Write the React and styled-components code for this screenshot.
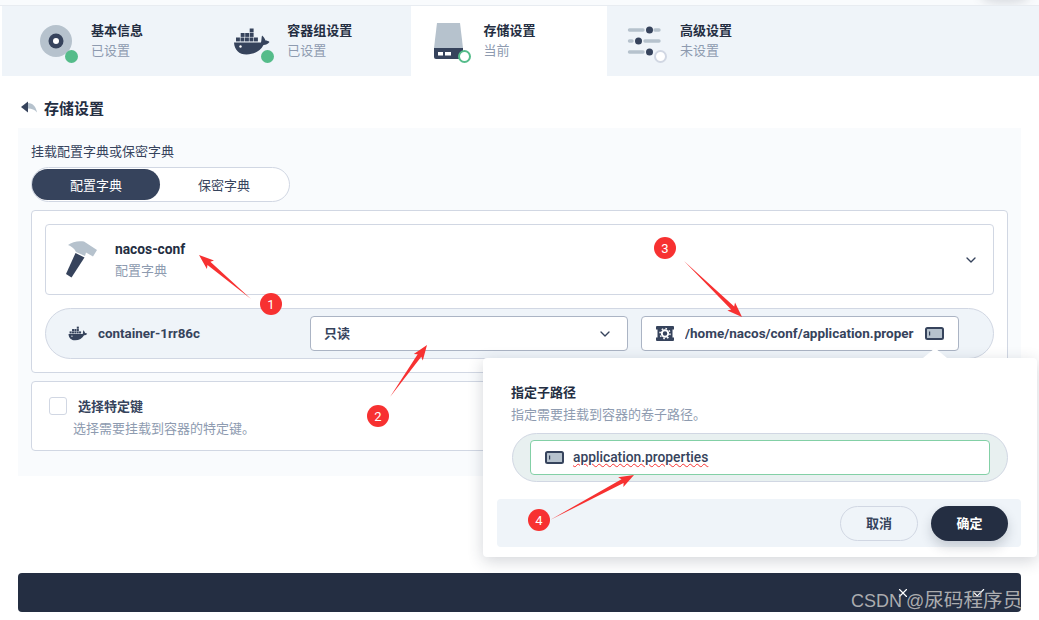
import styled, { createGlobalStyle } from "styled-components";
import { ChevronDown, Check, X } from "lucide-react";

const TABS = [
  { name: "基本信息", note: "已设置", state: "done", icon: "disc" },
  { name: "容器组设置", note: "已设置", state: "done", icon: "docker" },
  { name: "存储设置", note: "当前", state: "current", icon: "disk" },
  { name: "高级设置", note: "未设置", state: "todo", icon: "sliders" },
];

const MARKS = [
  { label: "1", x: 271, y: 304, from: [251, 299], to: [199, 255] },
  { label: "2", x: 378, y: 416, from: [390, 397], to: [427, 345] },
  { label: "3", x: 665, y: 248, from: [684, 261], to: [742, 317] },
  { label: "4", x: 539, y: 520, from: [550, 520], to: [634, 475] },
];

const DARK = "#36435c";
const LIGHT = "#b6c2cd";

function DockerShape() {
  const boxes = [
    [19.7, 3.5],
    [10.7, 8],
    [15.2, 8],
    [19.7, 8],
    [6, 12.5],
    [10.5, 12.5],
    [15, 12.5],
    [19.5, 12.5],
    [24, 12.5],
  ];
  return (
    <>
      {boxes.map(([x, y]) => (
        <rect key={`${x}-${y}`} x={x} y={y} width="3.9" height="3.9" fill={DARK} />
      ))}
      <path
        fill={DARK}
        d="M4 17.5H31C31.5 15 31.5 12.5 32 10.5C33.5 11.5 35 14 35.5 15.5C37 15.5 38.5 16 39.5 17C38 19 36 20 33.5 20C30.5 26 24 29.5 16.5 29.5C9 29.5 4.5 25 4 17.5Z"
      />
      <circle cx="10.5" cy="21.5" r="1.2" fill="#fff" />
    </>
  );
}

function TabIcon({ kind }) {
  if (kind === "disc") {
    return (
      <svg width="44" height="44" viewBox="0 0 44 44">
        <circle cx="22" cy="22" r="16" fill={LIGHT} />
        <circle cx="22" cy="22" r="7.5" fill={DARK} />
        <circle cx="22" cy="22" r="3" fill="#fff" />
      </svg>
    );
  }
  if (kind === "docker") {
    return (
      <svg width="44" height="44" viewBox="0 -6 44 44">
        <DockerShape />
      </svg>
    );
  }
  if (kind === "disk") {
    return (
      <svg width="44" height="44" viewBox="0 0 44 44">
        <path fill={LIGHT} d="M10 4H33L36 29H7Z" />
        <path fill={DARK} d="M7 29H36V38a2 2 0 0 1-2 2H9a2 2 0 0 1-2-2Z" />
        <rect x="11" y="33" width="5" height="3.5" fill="#fff" />
        <rect x="18" y="33" width="6" height="3.5" fill="#fff" />
      </svg>
    );
  }
  return (
    <svg width="44" height="44" viewBox="0 0 44 44" strokeLinecap="round">
      <g stroke={LIGHT} strokeWidth="3.4">
        <path d="M6.5 11H20M32 11H36" />
        <path d="M6.5 22H9M22 22H36" />
        <path d="M6.5 33H20" />
      </g>
      <circle cx="26.5" cy="11" r="3.5" fill={DARK} />
      <circle cx="15.5" cy="22" r="3.5" fill={DARK} />
      <circle cx="26.5" cy="33" r="3.5" fill={DARK} />
    </svg>
  );
}

function HammerIcon() {
  return (
    <svg width="40" height="44" viewBox="62 238 40 44">
      <path fill={LIGHT} d="M68 245C72 241.5 79 240.5 84 241.5L97 250L93 256.5L86 252.5L85 256L76 252C74 248 71 246 68 245Z" />
      <path fill={DARK} d="M75.5 253L84.5 257.5L71.5 277.5L66 274Z" />
    </svg>
  );
}

function GearIcon() {
  return (
    <svg width="18" height="15" viewBox="0 0 18 15">
      <path fill={DARK} d="M1 0H17a1 1 0 0 1 1 1V3.5H16.5V11.5H18V14a1 1 0 0 1-1 1H1a1 1 0 0 1-1-1V11.5H1.5V3.5H0V1a1 1 0 0 1 1-1Z" />
      <circle cx="9" cy="7.5" r="5" fill="none" stroke="#fff" strokeWidth="1.5" strokeDasharray="1.6 2.3" />
      <circle cx="9" cy="7.5" r="3.2" fill="none" stroke="#fff" strokeWidth="1.9" />
    </svg>
  );
}

function VolumeIcon() {
  return (
    <svg width="19" height="13" viewBox="0 0 19 13">
      <rect x="1" y="1" width="17" height="11" rx="1.5" fill={LIGHT} stroke={DARK} strokeWidth="2" />
      <rect x="4" y="4.5" width="1.2" height="4" fill={DARK} />
    </svg>
  );
}

function ArrowMark({ from, to }) {
  const dx = to[0] - from[0];
  const dy = to[1] - from[1];
  const len = Math.hypot(dx, dy);
  const ux = dx / len;
  const uy = dy / len;
  const at = (back, side) => `${to[0] - ux * back - uy * side},${to[1] - uy * back + ux * side}`;
  const points = [
    `${from[0]},${from[1]}`,
    at(13, 2.2),
    at(15, 5.5),
    `${to[0]},${to[1]}`,
    at(15, -5.5),
    at(13, -2.2),
  ].join(" ");
  return <polygon points={points} fill="#f73131" />;
}

export default function App() {
  return (
    <Page>
      <GlobalStyle />
      <TopStrip />
      <Tabs>
        {TABS.map((tab) => (
          <Tab key={tab.name} $active={tab.state === "current"}>
            <TabIconBox>
              <TabIcon kind={tab.icon} />
              <StatusDot $state={tab.state} />
            </TabIconBox>
            <div>
              <TabName>{tab.name}</TabName>
              <TabNote>{tab.note}</TabNote>
            </div>
          </Tab>
        ))}
      </Tabs>

      <TitleRow>
        <svg width="18" height="14" viewBox="0 0 18 14">
          <path fill={DARK} d="M1 7L8 1.5V12.5Z" />
          <path fill={LIGHT} d="M8 3C13 3 16 7 17 12.5C14.5 9.5 12 8.5 8 8.5Z" />
        </svg>
        存储设置
      </TitleRow>

      <Panel>
        <FieldLabel>挂载配置字典或保密字典</FieldLabel>
        <Switch>
          <SwitchItem $on>配置字典</SwitchItem>
          <SwitchItem>保密字典</SwitchItem>
        </Switch>

        <Box>
          <ConfigCard>
            <HammerIcon />
            <ConfigText>
              <ConfigName>nacos-conf</ConfigName>
              <ConfigType>配置字典</ConfigType>
            </ConfigText>
            <ChevronDown size={16} color={DARK} strokeWidth={2} />
          </ConfigCard>

          <MountRow>
            <ContainerName>
              <svg width="20" height="15" viewBox="3 2.5 38 28">
                <DockerShape />
              </svg>
              container-1rr86c
            </ContainerName>
            <Field>
              <ReadMode>只读</ReadMode>
              <ChevronDown size={16} color={DARK} strokeWidth={2} />
            </Field>
            <Field>
              <GearIcon />
              <PathText>/home/nacos/conf/application.proper</PathText>
              <VolumeIcon />
            </Field>
          </MountRow>
        </Box>

        <KeysBox>
          <KeysHead>
            <CheckBox />
            <KeysTitle>选择特定键</KeysTitle>
          </KeysHead>
          <KeysNote>选择需要挂载到容器的特定键。</KeysNote>
        </KeysBox>
      </Panel>

      <BottomBar>
        <X size={14} color="#fff" strokeWidth={2} />
        <Check size={14} color="#fff" strokeWidth={2} />
      </BottomBar>

      <Popover>
        <PopHead>
          <PopTitle>指定子路径</PopTitle>
          <PopNote>指定需要挂载到容器的卷子路径。</PopNote>
        </PopHead>
        <SubPathPill>
          <SubPathInput>
            <VolumeIcon />
            <SubPathText>application.properties</SubPathText>
          </SubPathInput>
        </SubPathPill>
        <PopFooter>
          <CancelButton>取消</CancelButton>
          <ConfirmButton>确定</ConfirmButton>
        </PopFooter>
      </Popover>

      <Annotations width="1039" height="620" viewBox="0 0 1039 620">
        {MARKS.map((mark) => (
          <ArrowMark key={mark.label} from={mark.from} to={mark.to} />
        ))}
      </Annotations>
      {MARKS.map((mark) => (
        <NumberBadge key={mark.label} $x={mark.x} $y={mark.y}>
          {mark.label}
        </NumberBadge>
      ))}

      <Watermark>
        CSDN @<WatermarkCjk>尿码程序员</WatermarkCjk>
      </Watermark>
    </Page>
  );
}

const GlobalStyle = createGlobalStyle`
  html, body {
    margin: 0;
    background: #fff;
  }
  body {
    font-family: Roboto, "Noto Sans CJK SC", sans-serif;
    color: #242e42;
  }
`;

const Page = styled.div`
  position: relative;
  width: 1039px;
  height: 620px;
  overflow: hidden;
  background: #fff;
`;

const TopStrip = styled.div`
  position: relative;
  height: 5px;
  background: #f9fbfd;
  border-bottom: 1px solid #e8ecf1;
  overflow: hidden;

  &::after {
    content: "";
    position: absolute;
    left: 980px;
    top: -12px;
    width: 50px;
    height: 16px;
    border-radius: 50%;
    background: rgba(36, 46, 66, 0.14);
    filter: blur(5px);
  }
`;

const Tabs = styled.div`
  display: flex;
  height: 70px;
  margin-left: 2px;
  padding-left: 16px;
  background: #eff4f9;
`;

const Tab = styled.div`
  display: flex;
  align-items: center;
  gap: 13px;
  width: 196.3px;
  padding-left: 16px;
  box-sizing: border-box;
  background: ${(props) => (props.$active ? "#fff" : "transparent")};
`;

const TabIconBox = styled.div`
  position: relative;
  width: 44px;
  height: 44px;
  flex: none;

  svg {
    display: block;
  }
`;

const StatusDot = styled.span`
  position: absolute;
  right: 0;
  bottom: 0;
  width: 13px;
  height: 13px;
  box-sizing: border-box;
  border-radius: 50%;
  background: ${(props) => (props.$state === "done" ? "#55bc8a" : "#fff")};
  border: 2px solid
    ${(props) =>
      props.$state === "todo" ? "#d1d7e3" : "#55bc8a"};
`;

const TabName = styled.div`
  font-size: 13px;
  font-weight: 700;
  line-height: 20px;
`;

const TabNote = styled.div`
  font-size: 13px;
  line-height: 20px;
  color: #8e9bb0;
`;

const TitleRow = styled.div`
  display: flex;
  align-items: center;
  gap: 6px;
  height: 52px;
  padding: 10px 0 0 20px;
  box-sizing: border-box;
  font-size: 15px;
  font-weight: 700;
`;

const Panel = styled.div`
  height: 348px;
  margin: 0 18px;
  padding: 16px 13px 0;
  box-sizing: border-box;
  background: #f9fbfd;
`;

const FieldLabel = styled.div`
  font-size: 13px;
  line-height: 16px;
  color: #36435c;
`;

const Switch = styled.div`
  display: flex;
  width: 259px;
  height: 35px;
  margin-top: 7px;
  padding: 1px 1px 1px 0;
  box-sizing: border-box;
  background: #fff;
  border: 1px solid #d1d7e3;
  border-radius: 18px;
`;

const SwitchItem = styled.div`
  display: flex;
  align-items: center;
  justify-content: center;
  width: 128px;
  border-radius: 16px;
  font-size: 13px;
  background: ${(props) => (props.$on ? "#36435c" : "transparent")};
  color: ${(props) => (props.$on ? "#fff" : "#36435c")};
`;

const Box = styled.div`
  height: 163px;
  margin-top: 8px;
  padding: 13px 13px 0;
  box-sizing: border-box;
  background: #fff;
  border: 1px solid #d1d7e3;
  border-radius: 4px;
`;

const ConfigCard = styled.div`
  display: flex;
  align-items: center;
  gap: 13px;
  height: 71px;
  padding: 0 14px 0 16px;
  box-sizing: border-box;
  border: 1px solid #d1d7e3;
  border-radius: 4px;
`;

const ConfigText = styled.div`
  flex: 1;
`;

const ConfigName = styled.div`
  font-size: 13.8px;
  font-weight: 700;
  line-height: 18px;
  margin-top: 1px;
`;

const ConfigType = styled.div`
  font-size: 13px;
  line-height: 18px;
  margin-top: 4px;
  color: #8e9bb0;
`;

const MountRow = styled.div`
  display: grid;
  grid-template-columns: 229px 318px 318px;
  column-gap: 13px;
  align-items: center;
  height: 51px;
  margin-top: 13px;
  padding-left: 22px;
  box-sizing: border-box;
  background: #eff4f9;
  border: 1px solid #d1d7e3;
  border-radius: 26px;
`;

const ContainerName = styled.div`
  display: flex;
  align-items: center;
  gap: 10px;
  font-size: 13.4px;
  font-weight: 700;
  color: #36435c;
`;

const Field = styled.div`
  display: flex;
  align-items: center;
  gap: 11px;
  height: 35px;
  padding: 0 14px 2px;
  box-sizing: border-box;
  background: #fff;
  border: 1px solid #abb4c4;
  border-radius: 4px;

  svg {
    margin-top: 2px;
  }
`;

const ReadMode = styled.span`
  flex: 1;
  margin-left: -1px;
  font-size: 13px;
  font-weight: 700;
  color: #36435c;
`;

const PathText = styled.span`
  flex: 1;
  min-width: 0;
  overflow: hidden;
  white-space: nowrap;
  font-size: 13.5px;
  font-weight: 700;
  color: #36435c;
`;

const KeysBox = styled.div`
  height: 70px;
  margin-top: 8px;
  padding: 14px 17px 0;
  box-sizing: border-box;
  background: #fff;
  border: 1px solid #d1d7e3;
  border-radius: 4px;
`;

const KeysHead = styled.div`
  display: flex;
  align-items: center;
  gap: 11px;
`;

const CheckBox = styled.span`
  width: 18px;
  height: 18px;
  box-sizing: border-box;
  border: 1px solid #d1d7e3;
  border-radius: 3px;
  background: #fff;
`;

const KeysTitle = styled.span`
  font-size: 13px;
  font-weight: 700;
  color: #36435c;
`;

const KeysNote = styled.div`
  margin: 5px 0 0 24px;
  font-size: 13px;
  line-height: 18px;
  color: #8e9bb0;
`;

const BottomBar = styled.div`
  display: flex;
  justify-content: flex-end;
  gap: 62px;
  height: 39px;
  margin: 97px 18px 0;
  padding: 13px 35px 0 0;
  box-sizing: border-box;
  background: #242e42;
  border-radius: 4px;
`;

const Popover = styled.div`
  position: absolute;
  left: 483px;
  top: 358px;
  width: 554px;
  height: 199px;
  background: #fff;
  border-radius: 4px;
  box-shadow: 0 4px 16px rgba(36, 46, 66, 0.2);

  &::before {
    content: "";
    position: absolute;
    left: 440px;
    top: -10px;
    border-left: 12px solid transparent;
    border-right: 12px solid transparent;
    border-bottom: 10px solid #fff;
  }
`;

const PopHead = styled.div`
  padding: 26px 28px 0;
  height: 75px;
  box-sizing: border-box;
`;

const PopTitle = styled.div`
  font-size: 13px;
  font-weight: 700;
  line-height: 18px;
`;

const PopNote = styled.div`
  font-size: 13px;
  line-height: 18px;
  margin-top: 4px;
  color: #8e9bb0;
`;

const SubPathPill = styled.div`
  display: flex;
  align-items: center;
  height: 49px;
  margin: 0 29px;
  padding: 0 17px;
  box-sizing: border-box;
  background: #e8f0f0;
  border: 1px solid #d1d7e3;
  border-radius: 25px;
`;

const SubPathInput = styled.div`
  display: flex;
  align-items: center;
  gap: 9px;
  flex: 1;
  height: 35px;
  padding: 0 14px 2px;
  box-sizing: border-box;
  background: #fff;
  border: 1px solid #83d0a6;
  border-radius: 4px;

  svg {
    margin-top: 2px;
  }
`;

const SubPathText = styled.span`
  font-size: 13.8px;
  font-weight: 500;
  color: #36435c;
  text-decoration: underline wavy #f73131 1px;
  text-underline-offset: 1px;
`;

const PopFooter = styled.div`
  display: flex;
  justify-content: flex-end;
  align-items: center;
  gap: 13px;
  height: 48px;
  margin: 17px 16px 0 14px;
  padding-right: 13px;
  box-sizing: border-box;
  background: #eff4f9;
  border-radius: 4px;
`;

const CancelButton = styled.div`
  display: flex;
  align-items: center;
  justify-content: center;
  width: 78px;
  height: 35px;
  padding-bottom: 2px;
  box-sizing: border-box;
  border: 1px solid #d1d7e3;
  border-radius: 18px;
  font-size: 13px;
  font-weight: 700;
  color: #36435c;
`;

const ConfirmButton = styled(CancelButton)`
  width: 77px;
  border: none;
  background: #242e42;
  color: #fff;
  box-shadow: 0 6px 12px rgba(36, 46, 66, 0.2);
`;

const Annotations = styled.svg`
  position: absolute;
  left: 0;
  top: 0;
  pointer-events: none;
`;

const NumberBadge = styled.span`
  position: absolute;
  left: ${(props) => props.$x - 11}px;
  top: ${(props) => props.$y - 11}px;
  width: 22px;
  height: 22px;
  display: flex;
  align-items: center;
  justify-content: center;
  border-radius: 50%;
  background: #f73131;
  color: #fff;
  font-size: 13px;
`;

const Watermark = styled.div`
  position: absolute;
  left: 851px;
  top: 586px;
  font-family: "Liberation Sans", "Noto Sans CJK SC", sans-serif;
  font-size: 18px;
  line-height: 28px;
  white-space: nowrap;
  word-spacing: -1px;
  color: rgba(196, 196, 196, 0.85);
`;

const WatermarkCjk = styled.span`
  font-size: 19.6px;
`;
